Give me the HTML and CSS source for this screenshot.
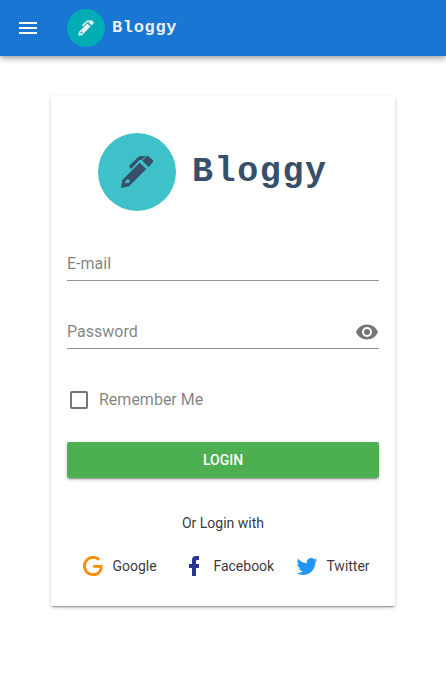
FILE: index.html
```html
<!DOCTYPE html>
<html lang="en">
<head>
<meta charset="utf-8">
<title>Bloggy</title>
<link rel="stylesheet" href="styles.css">
</head>
<body>
<svg class="defs" aria-hidden="true">
  <symbol id="pen" viewBox="24 24 234 234">
    <circle cx="141" cy="141" r="117" fill="var(--disc)"/>
    <path fill="currentColor" fill-rule="evenodd" d="M93 189L97 165L149 113L169 132L117 184ZM105 177L108 173L114 175L120 170L118 164L112 163L106 169Z"/>
    <path fill="currentColor" d="M157 107L169 94Q172 91 175 94L189 106Q191 109 188 112L176 126Z"/>
    <path fill="currentColor" d="M119 121L145 96Q148 93 152 93H167L155 105L149 104L129 126Q127 131 122 131Q116 128 119 121Z"/>
  </symbol>
</svg>
<header class="toolbar">
  <svg class="icon" viewBox="0 0 24 24"><path d="M3,6H21V8H3V6M3,11H21V13H3V11M3,16H21V18H3V16Z"/></svg>
  <svg class="brand-mark"><use href="#pen"/></svg>
  <span class="brand-name">Bloggy</span>
</header>
<main class="card">
  <div class="logo">
    <svg class="logo-mark"><use href="#pen"/></svg>
    <span class="logo-name">Bloggy</span>
  </div>
  <div class="field"><span>E-mail</span></div>
  <div class="field">
    <span>Password</span>
    <svg class="icon" viewBox="0 0 24 24"><path d="M12,9A3,3 0 0,0 9,12A3,3 0 0,0 12,15A3,3 0 0,0 15,12A3,3 0 0,0 12,9M12,17A5,5 0 0,1 7,12A5,5 0 0,1 12,7A5,5 0 0,1 17,12A5,5 0 0,1 12,17M12,4.5C7,4.5 2.73,7.61 1,12C2.73,16.39 7,19.5 12,19.5C17,19.5 21.27,16.39 23,12C21.27,7.61 17,4.5 12,4.5Z"/></svg>
  </div>
  <div class="remember">
    <svg class="icon" viewBox="0 0 24 24"><path d="M19,3H5C3.89,3 3,3.89 3,5V19A2,2 0 0,0 5,21H19A2,2 0 0,0 21,19V5C21,3.89 20.1,3 19,3M19,5V19H5V5H19Z"/></svg>
    <span>Remember Me</span>
  </div>
  <button class="login" type="button">LOGIN</button>
  <p class="or">Or Login with</p>
  <div class="providers">
    <div class="provider google"><svg class="icon" viewBox="0 0 24 24"><path d="M21.35,11.1H12.18V13.83H18.69C18.36,17.64 15.19,19.27 12.19,19.27C8.36,19.27 5,16.25 5,12C5,7.9 8.2,4.73 12.2,4.73C15.29,4.73 17.1,6.7 17.1,6.7L19,4.72C19,4.72 16.56,2 12.1,2C6.42,2 2.03,6.8 2.03,12C2.03,17.05 6.16,22 12.25,22C17.6,22 21.5,18.33 21.5,12.91C21.5,11.76 21.35,11.1 21.35,11.1V11.1Z"/></svg><span>Google</span></div>
    <div class="provider facebook"><svg class="icon" viewBox="0 0 24 24"><path d="M17,2V6H15C14.31,6 14,6.81 14,7.5V10H17V14H14V22H10V14H7V10H10V6A4,4 0 0,1 14,2H17Z"/></svg><span>Facebook</span></div>
    <div class="provider twitter"><svg class="icon" viewBox="0 0 24 24"><path d="M22.46,6C21.69,6.35 20.86,6.58 20,6.69C20.88,6.16 21.56,5.32 21.88,4.31C21.05,4.81 20.13,5.16 19.16,5.36C18.37,4.5 17.26,4 16,4C13.65,4 11.73,5.92 11.73,8.29C11.73,8.63 11.77,8.96 11.84,9.27C8.28,9.09 5.11,7.38 3,4.79C2.63,5.42 2.42,6.16 2.42,6.94C2.42,8.43 3.17,9.75 4.33,10.5C3.62,10.5 2.96,10.3 2.38,10V10.03C2.38,12.11 3.86,13.85 5.82,14.24C5.46,14.34 5.08,14.39 4.69,14.39C4.42,14.39 4.15,14.36 3.89,14.31C4.43,16 6,17.26 7.89,17.29C6.43,18.45 4.58,19.13 2.56,19.13C2.22,19.13 1.88,19.11 1.54,19.07C3.44,20.29 5.7,21 8.12,21C16,21 20.33,14.46 20.33,8.79C20.33,8.6 20.33,8.42 20.32,8.23C21.16,7.63 21.88,6.87 22.46,6Z"/></svg><span>Twitter</span></div>
  </div>
</main>
</body>
</html>
```
FILE: styles.css
```css
* { box-sizing: border-box; }
body {
  margin: 0;
  min-height: 678px;
  background: #fff;
  font-family: Roboto, "Liberation Sans", sans-serif;
  font-size: 14px;
  line-height: 20px;
  color: rgba(0, 0, 0, .8);
}
.defs { display: none; }
svg { display: block; flex: none; }
.icon { width: 24px; height: 24px; fill: currentColor; }
.toolbar {
  display: flex;
  align-items: center;
  height: 56px;
  padding-left: 16px;
  background: #1976d2;
  color: #fff;
  box-shadow: 0 2px 4px -1px rgba(0,0,0,.2), 0 4px 5px rgba(0,0,0,.14), 0 1px 10px rgba(0,0,0,.12);
}
.brand-mark { --disc: #00adb5; width: 38px; height: 38px; margin-left: 27px; color: #eee; }
.brand-name {
  margin-left: 7px;
  font: bold 17px/20px "Liberation Mono", monospace;
  letter-spacing: .65px;
  color: #eee;
}
.card {
  width: 344px;
  height: 510px;
  margin: 40px 0 0 51px;
  padding: 37px 16px 0;
  border-radius: 2px;
  box-shadow: 0 3px 1px -2px rgba(0,0,0,.2), 0 2px 2px rgba(0,0,0,.14), 0 1px 5px rgba(0,0,0,.12);
}
.logo { display: flex; align-items: center; height: 78px; padding-left: 31px; }
.logo-mark { --disc: #3fc1c9; width: 78px; height: 78px; color: #364f6b; }
.logo-name {
  margin-left: 16px;
  font: bold 35px/40px "Liberation Mono", monospace;
  letter-spacing: 1.6px;
  color: #364f6b;
}
.field {
  display: flex;
  align-items: center;
  justify-content: space-between;
  height: 34px;
  margin-top: 36px;
  border-bottom: 1px solid #949494;
  font-size: 16px;
  color: rgba(0, 0, 0, .54);
}
.field span, .remember span { color: rgba(0, 0, 0, .5); }
.field + .field { margin-top: 34px; }
.remember {
  display: flex;
  align-items: center;
  gap: 8px;
  height: 24px;
  margin-top: 39px;
  font-size: 16px;
  color: rgba(0, 0, 0, .54);
}
.login {
  display: block;
  width: 100%;
  height: 36px;
  margin-top: 30px;
  padding: 0;
  border: 0;
  border-radius: 2px;
  background: #4caf50;
  color: #fff;
  font: 500 14px/20px Roboto, sans-serif;
  box-shadow: 0 3px 1px -2px rgba(0,0,0,.2), 0 2px 2px rgba(0,0,0,.14), 0 1px 5px rgba(0,0,0,.12);
}
.or { margin: 35px 0 0; text-align: center; }
.providers { display: grid; grid-template-columns: 101px 113px 1fr; margin: 21px 0 0 14px; }
.provider { display: flex; align-items: center; gap: 7.4px; white-space: nowrap; }
.google svg { color: #fb8c00; }
.facebook svg { color: #283593; }
.twitter svg { color: #2196f3; }
```
